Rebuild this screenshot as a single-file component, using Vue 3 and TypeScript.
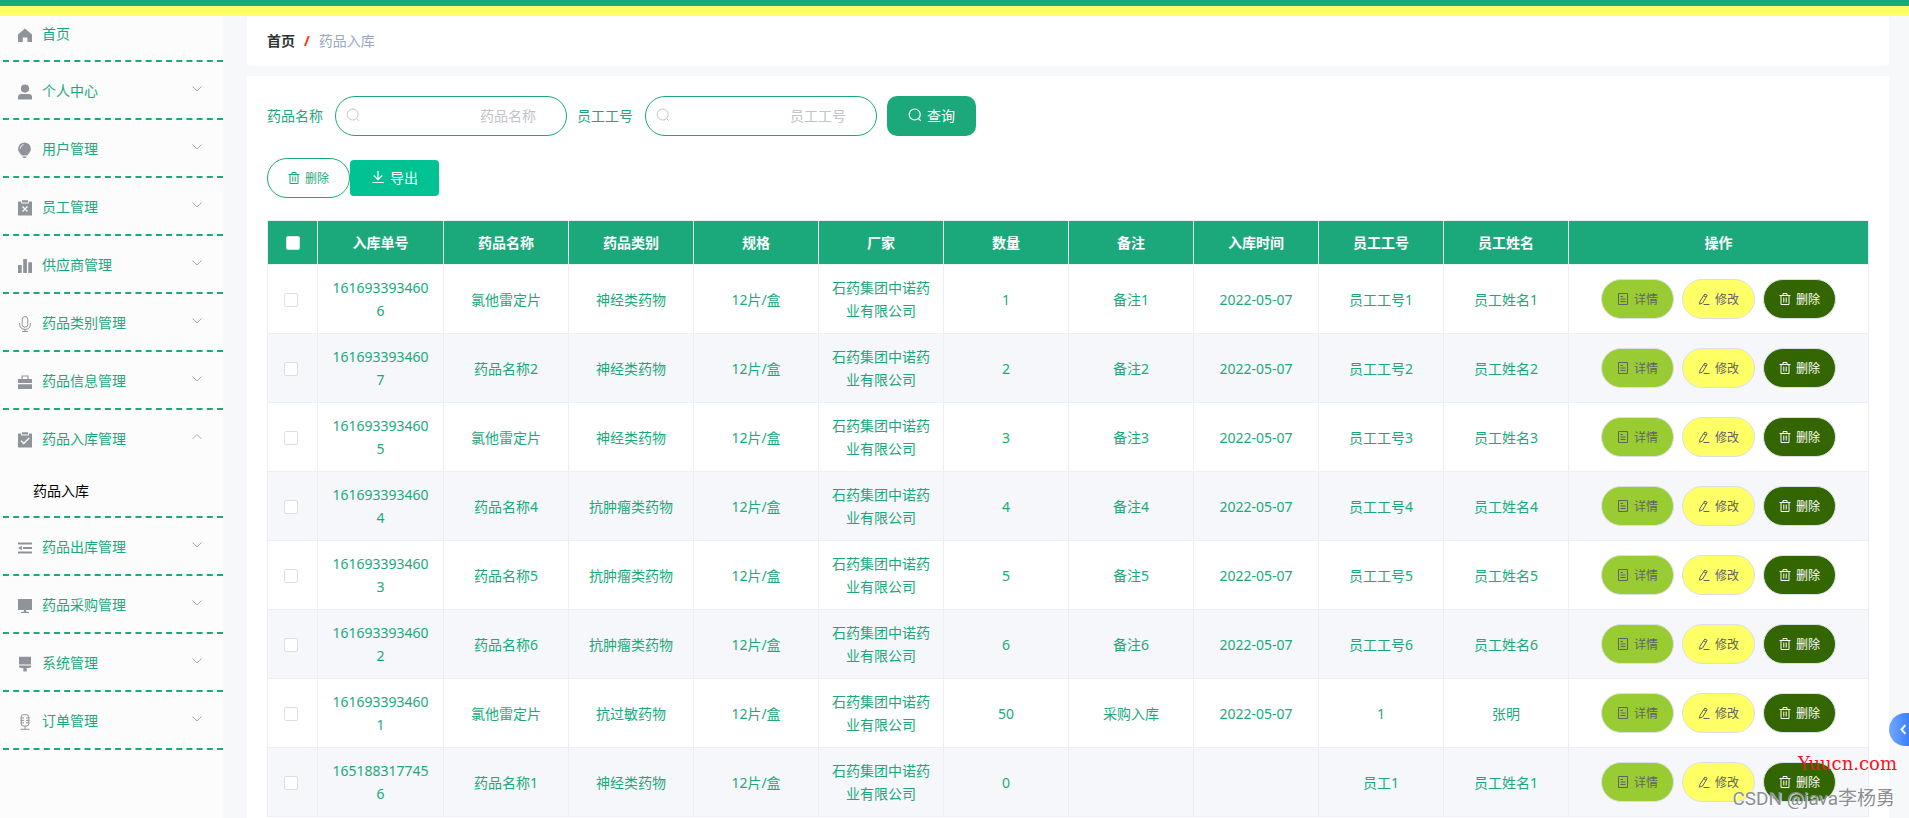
<script setup lang="ts">
import { ref } from 'vue'

interface MenuEntry {
  icon: string
  label: string
  children?: string[]
}

interface StockRow {
  no: string
  name: string
  kind: string
  spec: string
  maker: string
  amount: string
  note: string
  date: string
  staffNo: string
  staffName: string
}

const menu: MenuEntry[] = [
  { icon: 'user', label: '个人中心' },
  { icon: 'bulb', label: '用户管理' },
  { icon: 'release', label: '员工管理' },
  { icon: 'bars', label: '供应商管理' },
  { icon: 'mic', label: '药品类别管理' },
  { icon: 'case', label: '药品信息管理' },
  { icon: 'claim', label: '药品入库管理', children: ['药品入库'] },
  { icon: 'fold', label: '药品出库管理' },
  { icon: 'screen', label: '药品采购管理' },
  { icon: 'brush', label: '系统管理' },
  { icon: 'mic2', label: '订单管理' },
]

const columns = ['入库单号', '药品名称', '药品类别', '规格', '厂家', '数量', '备注', '入库时间', '员工工号', '员工姓名']

const maker = '石药集团中诺药业有限公司'
const spec = '12片/盒'
const day = '2022-05-07'

const rows: StockRow[] = [
  { no: '1616933934606', name: '氯他雷定片', kind: '神经类药物', spec, maker, amount: '1', note: '备注1', date: day, staffNo: '员工工号1', staffName: '员工姓名1' },
  { no: '1616933934607', name: '药品名称2', kind: '神经类药物', spec, maker, amount: '2', note: '备注2', date: day, staffNo: '员工工号2', staffName: '员工姓名2' },
  { no: '1616933934605', name: '氯他雷定片', kind: '神经类药物', spec, maker, amount: '3', note: '备注3', date: day, staffNo: '员工工号3', staffName: '员工姓名3' },
  { no: '1616933934604', name: '药品名称4', kind: '抗肿瘤类药物', spec, maker, amount: '4', note: '备注4', date: day, staffNo: '员工工号4', staffName: '员工姓名4' },
  { no: '1616933934603', name: '药品名称5', kind: '抗肿瘤类药物', spec, maker, amount: '5', note: '备注5', date: day, staffNo: '员工工号5', staffName: '员工姓名5' },
  { no: '1616933934602', name: '药品名称6', kind: '抗肿瘤类药物', spec, maker, amount: '6', note: '备注6', date: day, staffNo: '员工工号6', staffName: '员工姓名6' },
  { no: '1616933934601', name: '氯他雷定片', kind: '抗过敏药物', spec, maker, amount: '50', note: '采购入库', date: day, staffNo: '1', staffName: '张明' },
  { no: '1651883177456', name: '药品名称1', kind: '神经类药物', spec, maker, amount: '0', note: '', date: '', staffNo: '员工1', staffName: '员工姓名1' },
]

const drugName = ref('')
const staffNo = ref('')
const picked = ref<string[]>([])
</script>

<template>
  <div class="app">
    <header class="topbar"></header>
    <div class="body">
      <nav class="side">
        <a class="home" href="#">
          <svg class="icon" viewBox="0 0 16 16"><path fill="currentColor" d="M8 1.6 15 7.6V15h-4.6v-4.4H5.8V15H1V7.6z" /></svg>
          <span>首页</span>
        </a>
        <div v-for="m in menu" :key="m.label" class="group">
          <a class="entry" href="#">
            <svg class="icon" viewBox="0 0 16 16">
              <g v-if="m.icon === 'user'" fill="currentColor"><circle cx="8" cy="4.6" r="4.1" /><path d="M1 15.5V13c0-2 1.400-3 3-3h8c1.600 0 3 1 3 3v2.500z" /></g>
              <g v-else-if="m.icon === 'bulb'"><path fill="currentColor" d="M7.500.5a6.400 6.400 0 0 1 6.400 6.400c0 3-2.200 4.200-3.700 6.600H4.800C3.300 11.100 1.100 9.900 1.100 6.900A6.400 6.400 0 0 1 7.500.5zM5.300 14.600h4.400l-.9 1.400H6.200z" /><path fill="none" stroke="#fcfcfc" d="M3.300 6.700c0-2.100 1.200-3.600 3.300-4" /></g>
              <g v-else-if="m.icon === 'release' || m.icon === 'claim'">
                <path fill="currentColor" d="M1 1.600h3.200v2h7.600v-2H15V15.500H1zM5 .2h6v2.300H5z" />
                <path v-if="m.icon === 'release'" fill="none" stroke="#fcfcfc" stroke-width="1.300" d="m5.500 6.500 5 5m0-5-5 5" />
                <path v-else fill="none" stroke="#fcfcfc" stroke-width="1.300" d="m4 8.800 2.700 2.700L12.200 6" />
              </g>
              <path v-else-if="m.icon === 'bars'" fill="currentColor" d="M1 7h3.700v8H1zM6.200 1h3.700v14H6.200zM11.300 4.300H15V15h-3.700z" />
              <g v-else-if="m.icon === 'mic'" fill="none" stroke="currentColor"><rect x="5.200" y=".6" width="5.600" height="10.600" rx="2.800" /><path d="M2.600 7v1.400c0 3 2.200 5 5.400 5s5.400-2 5.400-5V7M8 13.400v2M5 15.400h6" /></g>
              <g v-else-if="m.icon === 'case'"><path fill="currentColor" d="M1 5h14v4H1zM1 10.200h14V15H1z" /><path fill="none" stroke="currentColor" stroke-width="1.200" d="M5 5V2h6v3" /></g>
              <path v-else-if="m.icon === 'fold'" fill="currentColor" d="M1 2.600h14v1.800H1zM6 7.100h9v1.800H6zM1 8l3.800-2.200v4.400zM1 11.600h14v1.800H1z" />
              <path v-else-if="m.icon === 'screen'" fill="currentColor" d="M1 1h14v11H1zM7 12h2v1.600l3 .4v1H4v-1l3-.4z" />
              <path v-else-if="m.icon === 'brush'" fill="currentColor" d="M2 .8h12v7.700H2zM2 9.600h12v1c0 1-1 1.400-2 1.400H9.700v3.500H6.300V12H4c-1 0-2-.4-2-1.400z" />
              <g v-else fill="none" stroke="currentColor"><rect x="4.200" y=".7" width="7.600" height="11.300" rx="2.200" /><path d="M3.500 4H7M3.500 6.400H7M3.500 8.800H7M9 4h3.500M9 6.400h3.500M9 8.800h3.500M8 12v3M3.500 15.300h9" /></g>
            </svg>
            <span>{{ m.label }}</span>
            <svg class="arrow" viewBox="0 0 12 12"><path fill="none" stroke="currentColor" :d="m.children ? 'M1.500 8 6 3.500 10.500 8' : 'M1.500 3.500 6 8l4.500-4.500'" /></svg>
          </a>
          <a v-for="c in m.children" :key="c" class="sub" href="#">{{ c }}</a>
        </div>
      </nav>

      <main class="main">
        <div class="crumbs"><strong>首页</strong><b class="slash">/</b><span>药品入库</span></div>
        <section class="card">
          <form class="query" @submit.prevent>
            <label for="drug">药品名称</label>
            <div class="field">
              <svg class="glass" viewBox="0 0 14 14"><path fill="none" stroke="currentColor" d="M6.700 1a5.500 5.500 0 1 0 0 11 5.500 5.500 0 0 0 0-11zM10.500 10.500l2.300 2.300" /></svg>
              <input id="drug" v-model="drugName" type="text" placeholder="药品名称" />
            </div>
            <label for="staff">员工工号</label>
            <div class="field">
              <svg class="glass" viewBox="0 0 14 14"><path fill="none" stroke="currentColor" d="M6.700 1a5.500 5.500 0 1 0 0 11 5.500 5.500 0 0 0 0-11zM10.500 10.500l2.300 2.300" /></svg>
              <input id="staff" v-model="staffNo" type="text" placeholder="员工工号" />
            </div>
            <button class="search" type="submit">
              <svg class="i14" viewBox="0 0 14 14"><path fill="none" stroke="currentColor" stroke-width="1.200" d="M6.700 1a5.500 5.500 0 1 0 0 11 5.500 5.500 0 0 0 0-11zM10.500 10.500l2.300 2.300" /></svg>查询
            </button>
          </form>
          <div class="tools">
            <button class="remove" type="button">
              <svg class="i12" viewBox="0 0 12 12"><path fill="none" stroke="currentColor" d="M.5 2.500h11M4 2.500v-2h4v2M2 2.500v9h8v-9M4.800 4.500v5M7.200 4.500v5" /></svg>删除
            </button>
            <button class="export" type="button">
              <svg class="i14" viewBox="0 0 14 14"><path fill="none" stroke="currentColor" stroke-width="1.200" d="M7 1v8.500M2.800 5.500 7 9.700l4.200-4.200M1.300 12.500h11.400" /></svg>导出
            </button>
          </div>
          <table>
            <colgroup>
              <col class="c-check" />
              <col v-for="(c, i) in columns" :key="c" :class="{ 'c-no': i === 0 }" />
              <col class="c-ops" />
            </colgroup>
            <thead>
              <tr>
                <th><input type="checkbox" aria-label="全选" /></th>
                <th v-for="c in columns" :key="c">{{ c }}</th>
                <th>操作</th>
              </tr>
            </thead>
            <tbody>
              <tr v-for="r in rows" :key="r.no">
                <td class="tick"><input v-model="picked" type="checkbox" :value="r.no" :aria-label="r.no" /></td>
                <td>{{ r.no }}</td>
                <td>{{ r.name }}</td>
                <td>{{ r.kind }}</td>
                <td>{{ r.spec }}</td>
                <td>{{ r.maker }}</td>
                <td>{{ r.amount }}</td>
                <td>{{ r.note }}</td>
                <td>{{ r.date }}</td>
                <td>{{ r.staffNo }}</td>
                <td>{{ r.staffName }}</td>
                <td>
                  <div class="ops">
                    <button class="op view" type="button">
                      <svg class="i12" viewBox="0 0 12 12"><path fill="none" stroke="currentColor" d="M1.500.5h9v11h-9zM3.500 3.500H6M3.500 6h5M3.500 8.500h5" /></svg>详情
                    </button>
                    <button class="op edit" type="button">
                      <svg class="i12" viewBox="0 0 12 12"><path fill="none" stroke="currentColor" d="M6.800 1 9.200 2.400 4.600 10 1.500 11.200 2 8.300zM5.800 2.800l2.300 1.400M5.500 11.500h6" /></svg>修改
                    </button>
                    <button class="op del" type="button">
                      <svg class="i12" viewBox="0 0 12 12"><path fill="none" stroke="currentColor" d="M.5 2.500h11M4 2.500v-2h4v2M2 2.500v9h8v-9M4.800 4.500v5M7.200 4.500v5" /></svg>删除
                    </button>
                  </div>
                </td>
              </tr>
            </tbody>
          </table>
        </section>
      </main>
    </div>

    <button class="handle" type="button" aria-label="展开">
      <svg viewBox="0 0 10 14"><path fill="none" stroke="currentColor" stroke-width="2.400" d="M8 1.500 3 7l5 5.500" /></svg>
    </button>
    <div class="site">Yuucn.com</div>
    <div class="author">CSDN @java李杨勇</div>
  </div>
</template>

<style>
body {
  margin: 0;
}
</style>

<style scoped>
* {
  box-sizing: border-box;
}
.app {
  position: relative;
  display: flex;
  flex-direction: column;
  height: 100vh;
  overflow: hidden;
  background: #f7f8fa;
  color: #1ba97b;
  font: 14px/23px "Noto Sans", "Noto Sans CJK SC", sans-serif;
}
.topbar {
  flex: none;
  height: 16px;
  background: #ffff66;
  border-top: 6px solid #1ba97b;
}
.body {
  display: flex;
  flex: 1;
  min-height: 0;
}
a {
  color: inherit;
  text-decoration: none;
}
button,
input {
  margin: 0;
  font-family: inherit;
}
button {
  display: inline-flex;
  align-items: center;
  justify-content: center;
  padding: 0;
  cursor: pointer;
}

.side {
  flex: none;
  width: 223px;
  padding-left: 3px;
  background: #fcfcfc;
}
.home,
.entry {
  display: flex;
  align-items: center;
  gap: 9px;
  padding: 0 20px 0 14px;
}
.home {
  height: 46px;
  padding-bottom: 10px;
  border-bottom: 2px dashed #1ba97b;
}
.group {
  border-bottom: 2px dashed #1ba97b;
}
.entry {
  height: 56px;
}
.icon {
  flex: none;
  width: 16px;
  height: 16px;
  color: #909399;
}
.home .icon,
.entry .icon {
  margin-top: 3px;
}
.arrow {
  width: 12px;
  height: 12px;
  margin-left: auto;
  margin-bottom: 2px;
  color: #aaacb0;
}
.sub {
  display: block;
  padding-left: 30px;
  color: #000;
  line-height: 50px;
}

.main {
  display: flex;
  flex: 1;
  flex-direction: column;
  gap: 10px;
  min-width: 0;
  padding: 0 20px 0 24px;
}
.crumbs {
  display: flex;
  flex: none;
  align-items: center;
  height: 50px;
  padding: 0 20px 2px;
  background: #fff;
  border-radius: 4px;
  color: #97a8be;
}
.crumbs strong {
  color: #303133;
}
.slash {
  margin: 0 9px;
  color: #ff3300;
}
.card {
  flex: 1;
  min-height: 0;
  padding: 20px;
  background: #fff;
}
.query {
  display: flex;
  align-items: center;
  gap: 10px;
}
.query label {
  margin-right: 2px;
  padding-bottom: 2px;
}
.field {
  position: relative;
  width: 232px;
}
.field input {
  display: block;
  width: 100%;
  height: 40px;
  padding: 0 30px 2px;
  border: 1px solid #1ba97b;
  border-radius: 20px;
  background: #fff;
  color: #606266;
  font-size: 14px;
  text-align: right;
}
.field input::placeholder {
  color: #c0c4cc;
  opacity: 1;
}
.glass {
  position: absolute;
  top: 12px;
  left: 11px;
  width: 14px;
  height: 14px;
  color: #c0c4cc;
}
.i14 {
  width: 14px;
  height: 14px;
}
.i12 {
  width: 12px;
  height: 12px;
}
.search,
.export {
  gap: 5px;
  width: 89px;
  padding-bottom: 2px;
  border: 0;
  color: #fff;
  font-size: 14px;
}
.search {
  height: 40px;
  border-radius: 10px;
  background: #1ba97b;
}
.tools {
  display: flex;
  align-items: center;
  margin: 22px 0;
}
.remove {
  gap: 5px;
  width: 83px;
  height: 40px;
  border: 1px solid #1ba97b;
  border-radius: 20px;
  background: #fff;
  color: #1ba97b;
  font-size: 12px;
}
.export {
  height: 36px;
  border-radius: 4px;
  background: #00c292;
}

table {
  width: 100%;
  table-layout: fixed;
  border-spacing: 0;
  border-top: 1px solid #ebeef5;
  border-left: 1px solid #ebeef5;
}
.c-check {
  width: 50px;
}
.c-no {
  width: 126px;
}
.c-ops {
  width: 300px;
}
th,
td {
  padding: 0 12px;
  border-right: 1px solid #ebeef5;
  border-bottom: 1px solid #ebeef5;
  text-align: center;
  word-break: break-all;
}
th {
  height: 44px;
  background: #1ba97b;
  color: #fff;
}
td {
  height: 69px;
}
tbody tr:nth-child(even) {
  background: #f5f7fa;
}
td.tick {
  padding: 2px 14px 0 10px;
}
th:last-child,
td:last-child {
  padding: 0;
}
table input {
  display: block;
  width: 14px;
  height: 14px;
  margin: 0 auto;
  appearance: none;
  border: 1px solid #dcdfe6;
  border-radius: 2px;
  background: #fff;
}
table input:checked {
  background: #1ba97b;
}
.ops {
  display: flex;
  justify-content: center;
  gap: 8px;
}
.op {
  gap: 5px;
  width: 73px;
  height: 40px;
  border: 1px solid #dcdfe6;
  border-radius: 20px;
  color: #606266;
  font-size: 12px;
}
.view {
  background: #99cc33;
}
.edit {
  background: #ffff66;
}
.del {
  background: #336600;
  color: #fff;
}

.handle {
  position: absolute;
  right: 0;
  bottom: 72px;
  justify-content: flex-end;
  width: 20px;
  height: 33px;
  padding-right: 2px;
  border: 0;
  border-radius: 17px 0 0 17px;
  background: linear-gradient(90deg, #73a8ff, #3a80ff);
  color: #fff;
}
.handle svg {
  width: 8px;
  height: 13px;
}
.site {
  position: absolute;
  right: 12px;
  bottom: 42px;
  color: #f5121d;
  font: 18px/24px "DejaVu Serif", serif;
}
.author {
  position: absolute;
  right: 14px;
  bottom: 6px;
  color: #8d8f92;
  font: 19px/26px Roboto, "Noto Sans CJK SC", sans-serif;
  text-shadow: 1px 1px 1px #fff;
}
</style>
